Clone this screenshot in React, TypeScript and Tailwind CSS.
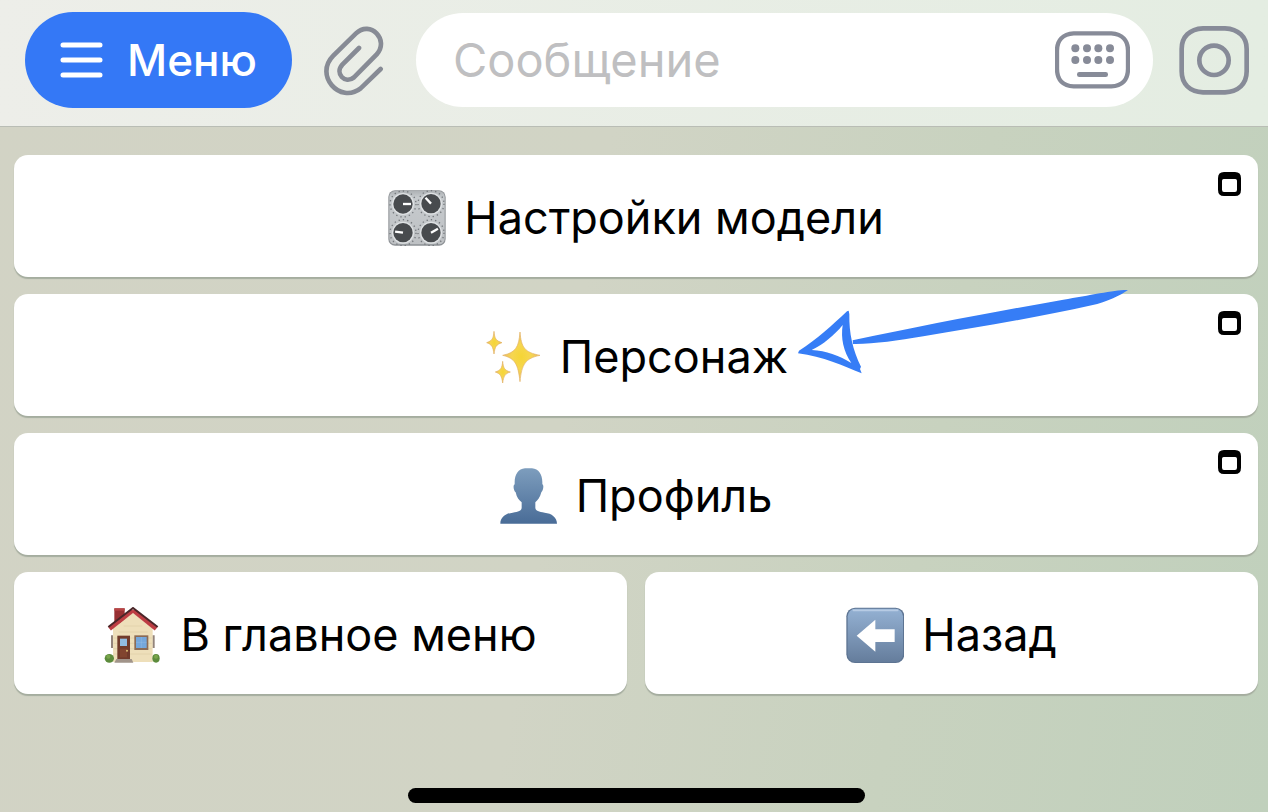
import type { ReactNode } from "react";

const ICON = "h-14 w-[58px] shrink-0";

function KnobsIcon() {
  const knobs = [
    { x: 102, y: 99, angle: 0 },
    { x: 186, y: 98, angle: 227 },
    { x: 102, y: 185, angle: 188 },
    { x: 186, y: 185, angle: -30 },
  ];
  return (
    <svg className={ICON} viewBox="57 57 174 168" aria-hidden="true">
      <defs>
        <linearGradient id="plate" x1="0" y1="0" x2="0" y2="1">
          <stop offset="0" stopColor="#aeb2b5" />
          <stop offset="0.12" stopColor="#c6cacd" />
          <stop offset="1" stopColor="#bec1c4" />
        </linearGradient>
      </defs>
      <rect x="58" y="58" width="172" height="166" rx="20" fill="#8d9195" />
      <rect x="61" y="60" width="166" height="160" rx="17" fill="url(#plate)" />
      {knobs.map((k) => (
        <g key={`${k.x}-${k.y}`}>
          <circle cx={k.x} cy={k.y} r="39" fill="none" stroke="#74787c" strokeWidth="4" strokeDasharray="4 9" />
          <circle cx={k.x} cy={k.y} r="33" fill="#dfe2e4" />
          <circle cx={k.x} cy={k.y} r="29" fill="#484b4e" />
          <path d="M0 0H24" stroke="#fff" strokeWidth="7" transform={`translate(${k.x} ${k.y}) rotate(${k.angle})`} />
        </g>
      ))}
    </svg>
  );
}

function SparklesIcon() {
  return (
    <svg className={ICON} viewBox="45 57 174 168" fill="url(#spark)" stroke="#e3b060" strokeWidth="2" aria-hidden="true">
      <defs>
        <radialGradient id="spark">
          <stop offset="0" stopColor="#f5d535" />
          <stop offset="0.5" stopColor="#f6d650" />
          <stop offset="1" stopColor="#eabc68" />
        </radialGradient>
      </defs>
      <path d="M153 66C157 112 166 127 213 136C169 145 158 163 153 215C147 163 139 145 101 136C141 127 149 112 153 66Z" />
      <path d="M75 64C77 87 81 92 99 98C82 103 78 110 75 132C72 110 68 103 53 98C69 92 73 87 75 64Z" />
      <path d="M101 154C103 175 107 181 124 186C108 191 104 198 101 219C98 198 94 191 79 186C95 181 99 175 101 154Z" />
    </svg>
  );
}

function PersonIcon() {
  return (
    <svg className={ICON} viewBox="60 54 174 168" aria-hidden="true">
      <defs>
        <linearGradient id="bust" x1="0" y1="0" x2="0" y2="1">
          <stop offset="0" stopColor="#7d9dbd" />
          <stop offset="1" stopColor="#496c97" />
        </linearGradient>
      </defs>
      <path
        d="M135 55H156C176 57 187 73 187 96V103C193 106 189 122 184 127C180 142 173 151 166 157V173C166 182 176 185 194 188C215 190 231 202 231 221H61C61 202 77 190 98 188C116 185 125 182 125 173V157C117 151 110 142 107 127C101 122 98 106 104 103V96C104 73 115 57 135 55Z"
        fill="url(#bust)"
      />
    </svg>
  );
}

function HouseIcon() {
  return (
    <svg className={ICON} viewBox="51 51 174 168" aria-hidden="true">
      <rect x="82" y="55" width="31" height="45" fill="#983033" />
      <path d="M82 55H113V62H82Z" fill="#b74445" />
      <path d="M72 136H80V174H72ZM196 136H203V174H196Z" fill="#93847b" />
      <path d="M78 115L138 68L197 115V216H78Z" fill="#eedfba" />
      <path d="M80 144H194M80 160H194M80 176H194M80 192H194M95 126H182M110 108H166" stroke="#e0cfa8" strokeWidth="2" />
      <path d="M138 61L207 117" stroke="#bd3d43" strokeWidth="12" />
      <path d="M138 61L68 117" stroke="#bd3d43" strokeWidth="12" />
      <path d="M64 111L138 54L212 111" fill="none" stroke="#4a2528" strokeWidth="6" />
      <ellipse cx="67" cy="205" rx="14" ry="13" fill="#5c8b3c" />
      <ellipse cx="207" cy="205" rx="11" ry="13" fill="#5c8b3c" />
      <circle cx="64" cy="200" r="6" fill="#79a54b" />
      <circle cx="207" cy="200" r="6" fill="#79a54b" />
      <rect x="91" y="137" width="38" height="71" fill="#713b2b" />
      <rect x="99" y="146" width="21" height="22" fill="#91bde2" />
      <path d="M99 176H120V202H99Z" fill="#81452f" />
      <circle cx="120" cy="182" r="3" fill="#ddc074" />
      <rect x="142" y="136" width="42" height="44" fill="#8b6b55" />
      <rect x="147" y="141" width="32" height="33" fill="#75a7db" />
      <path d="M147 157H179M163 141V174" stroke="#a1c4e6" strokeWidth="1" />
      <path d="M88 207H134L139 218H82Z" fill="#a1948a" />
    </svg>
  );
}

function BackIcon() {
  return (
    <svg className={ICON} viewBox="48 51 174 168" aria-hidden="true">
      <defs>
        <linearGradient id="tile" x1="0" y1="0" x2="0" y2="1">
          <stop offset="0" stopColor="#94b1d3" />
          <stop offset="1" stopColor="#657d9c" />
        </linearGradient>
      </defs>
      <rect x="49" y="53" width="174" height="166" rx="26" fill="#5d7492" />
      <rect x="53" y="56" width="166" height="160" rx="23" fill="url(#tile)" />
      <path d="M70 61H203" stroke="#b7cbe4" strokeWidth="5" strokeLinecap="round" />
      <path d="M80 137L136 89V118H194V156H136V185Z" fill="#fff" />
    </svg>
  );
}

function WindowBadge() {
  return (
    <svg className="absolute right-[17px] top-[17px] h-6 w-[23px]" viewBox="654 516 69 72" aria-hidden="true">
      <path
        fillRule="evenodd"
        d="M672 516H705Q723 516 723 535V569Q723 588 705 588H672Q654 588 654 569V535Q654 516 672 516ZM671 537Q666 537 666 542V569Q666 576 672 576H705Q711 576 711 569V542Q711 537 706 537Z"
      />
    </svg>
  );
}

function HandArrow() {
  return (
    <svg
      className="pointer-events-none absolute -top-1.5 left-[calc(50%+162px)] z-10 h-[87px] w-[330px]"
      viewBox="54 54 990 261"
      fill="#367df6"
      aria-hidden="true"
    >
      <path d="M1044 60C1010 58 930 76 850 89C650 124 440 164 218 211L219 222C280 223 350 212 430 199C600 170 780 141 935 106C980 96 1025 74 1044 60Z" />
      <path
        fillRule="evenodd"
        d="M206 122L208 132C207 190 218 240 243 290L240 297L245 310C190 288 130 260 54 250L57 242C112 208 157 165 201 124ZM188 165C162 197 130 223 95 240C140 243 175 256 214 279C190 244 182 205 188 165Z"
      />
    </svg>
  );
}

type KeyProps = { icon: ReactNode; label: string; webApp?: boolean; children?: ReactNode };

function Key({ icon, label, webApp, children }: KeyProps) {
  return (
    <button
      type="button"
      className="relative flex h-[122px] min-w-0 flex-1 items-center justify-center gap-[18px] rounded-[14px] bg-white pt-1 text-[45px] leading-[56px] text-black shadow-[0_2px_1px_#a5ad9f]"
    >
      {icon}
      <span>{label}</span>
      {webApp && <WindowBadge />}
      {children}
    </button>
  );
}

export default function App() {
  return (
    <div className="flex min-h-screen flex-col bg-linear-[100deg,#d2d3c5_0%,#d1d4c5_45%,#c8d2bf_72%,#c0d0bc_100%] font-['Inter','Noto_Sans',sans-serif]">
      <header className="flex items-center border-b border-[#b9bdb5] bg-linear-to-r from-[#edeee9] to-[#e4ede2] pb-[18px] pl-[25px] pr-[19px] pt-3">
        <button
          type="button"
          className="flex h-24 shrink-0 items-center gap-6 rounded-full bg-[#3478f6] px-[35px] text-[44px] font-medium leading-[56px] text-white"
        >
          <svg className="h-9 w-[43px]" viewBox="0 0 43 36" stroke="currentColor" strokeWidth="5" strokeLinecap="round" aria-hidden="true">
            <path d="M3 3H40M3 18H40M3 33H40" />
          </svg>
          Меню
        </button>

        <button type="button" aria-label="Прикрепить" className="ml-[31px] shrink-0">
          <svg className="h-[71px] w-[62px]" viewBox="970 72 186 213" fill="none" stroke="#878b95" strokeWidth="14" strokeLinecap="round" aria-hidden="true">
            <path d="M1078 141L1028 191C1004 217 1036 251 1063 229L1131 160C1170 117 1112 56 1069 97L1001 164C942 223 1021 310 1083 262L1143 204" />
          </svg>
        </button>

        <div className="ml-[31px] flex h-[94px] min-w-0 flex-1 items-center rounded-full bg-white pl-[37px] pr-[23px]">
          <input
            type="text"
            aria-label="Сообщение"
            placeholder="Сообщение"
            className="min-w-0 flex-1 bg-transparent text-[47px] leading-[56px] text-black outline-none placeholder:text-[#bfbfc1]"
          />
          <button type="button" aria-label="Клавиатура" className="shrink-0">
            <svg className="h-[58px] w-[75px]" viewBox="165 90 225 174" fill="#878b98" aria-hidden="true">
              <path
                d="M221 97H334C367 99 384 118 384 149V203C384 238 365 255 334 256H221C190 255 171 238 171 203V149C171 118 188 99 221 97Z"
                fill="none"
                stroke="#878b98"
                strokeWidth="13"
              />
              {[226, 261, 295, 330].map((x) => (
                <g key={x}>
                  <circle cx={x} cy="142" r="12" />
                  <circle cx={x} cy="177" r="12" />
                </g>
              ))}
              <rect x="231" y="213" width="93" height="15" rx="7" />
            </svg>
          </button>
        </div>

        <button type="button" aria-label="Видеосообщение" className="ml-[26px] shrink-0">
          <svg className="h-[70px] w-[70px]" viewBox="537 75 210 210" fill="none" stroke="#878b98" strokeWidth="14" aria-hidden="true">
            <path d="M609 85H675C715 87 740 110 740 147V214C740 252 715 275 675 277H609C569 275 545 252 545 214V147C545 110 569 87 609 85Z" />
            <circle cx="642" cy="181" r="44" />
          </svg>
        </button>
      </header>

      <main className="flex flex-col gap-[17px] pb-6 pl-3.5 pr-2.5 pt-7">
        <div className="flex">
          <Key icon={<KnobsIcon />} label="Настройки модели" webApp />
        </div>
        <div className="flex">
          <Key icon={<SparklesIcon />} label="Персонаж" webApp>
            <HandArrow />
          </Key>
        </div>
        <div className="flex">
          <Key icon={<PersonIcon />} label="Профиль" webApp />
        </div>
        <div className="flex gap-[18px]">
          <Key icon={<HouseIcon />} label="В главное меню" />
          <Key icon={<BackIcon />} label="Назад" />
        </div>
      </main>

      <footer className="mt-auto flex justify-center pb-[9px] pl-3.5 pr-2.5">
        <div className="h-[15px] w-[457px] max-w-full rounded-full bg-black" />
      </footer>
    </div>
  );
}
